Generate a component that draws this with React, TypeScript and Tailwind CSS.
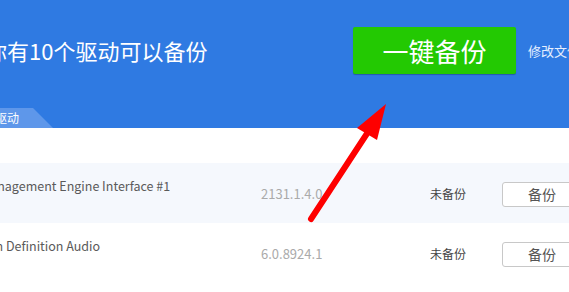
import React from "react";

const font = { fontFamily: '"Noto Sans CJK SC", "Noto Sans", sans-serif' };

function Row({ name, nameOffset, version, bg }: { name: string; nameOffset: string; version: string; bg: string }) {
  return (
    <div className={`flex h-[60px] items-center ${bg}`}>
      <div className="w-[261px] shrink-0 self-start overflow-hidden pt-[13px]">
        <div className={`whitespace-nowrap text-[12.5px] leading-[20px] text-[#5a5a5a] ${nameOffset}`}>{name}</div>
      </div>
      <div className="w-[169px] shrink-0 pt-[2px] text-[13px] text-[#aaa]">{version}</div>
      <div className="w-[72px] shrink-0 pt-[2px] text-[12px] text-[#444]">未备份</div>
      <div className="mt-[3px] flex h-[25px] w-[90px] shrink-0 items-center rounded-[3px] border border-[#c8c8c8] bg-white pl-[25px] text-[14px] text-[#555]">
        备份
      </div>
    </div>
  );
}

export default function App() {
  return (
    <div className="relative h-[292px] w-[569px] overflow-hidden bg-white" style={font}>
      <div className="flex h-[128px] flex-col bg-[#2f7ae2]">
        <div className="flex items-center pt-[27px]">
          <div className="ml-[-15px] w-[368px] shrink-0 whitespace-nowrap pb-[2px] text-[22px] leading-[30px] text-white">
            你有10个驱动可以备份
          </div>
          <div className="flex h-[47px] w-[163px] shrink-0 items-center justify-center rounded-[2px] bg-[#23c902] text-[26px] text-white shadow-[0_1px_1px_rgba(0,0,0,0.25)]">
            一键备份
          </div>
          <div className="ml-[12px] shrink-0 whitespace-nowrap text-[13px] text-[#e6efff]">修改文件夹</div>
        </div>
        <div className="mt-auto flex h-[20px] w-[53px] items-center overflow-hidden bg-[#5e97ea] [clip-path:polygon(0_0,33px_0,53px_100%,0_100%)]">
          <span className="ml-[-5px] whitespace-nowrap text-[12px] text-white">驱动</span>
        </div>
      </div>
      <div className="h-[35px]" />
      <Row name="Management Engine Interface #1" nameOffset="ml-[-20px]" version="2131.1.4.0" bg="bg-[#f5f8fd]" />
      <Row name="High Definition Audio" nameOffset="ml-[-24px]" version="6.0.8924.1" bg="bg-white" />
      <svg className="pointer-events-none absolute left-0 top-0" width="569" height="292" viewBox="0 0 569 292">
        <line x1="311" y1="219" x2="368" y2="132" stroke="#fe0000" strokeWidth="6" strokeLinecap="round" />
        <polygon points="386,104 357,128 377,140" fill="#fe0000" />
      </svg>
    </div>
  );
}
